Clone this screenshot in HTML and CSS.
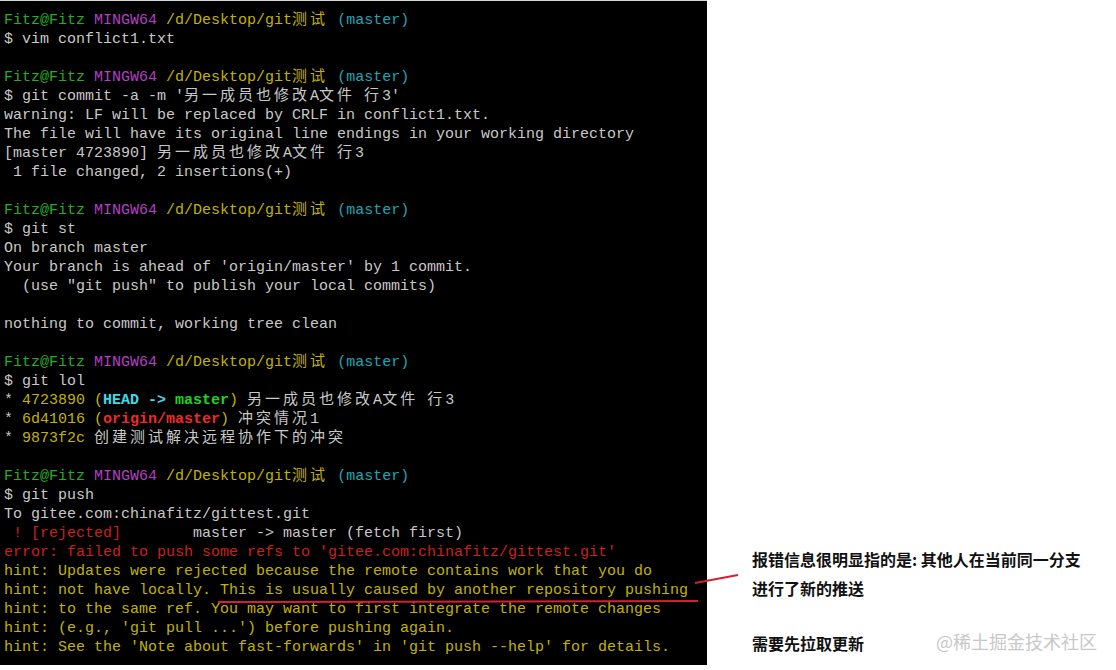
FILE: index.html
```html
<!DOCTYPE html>
<html lang="zh-CN">
  <head>
    <meta charset="utf-8" />
    <meta name="viewport" content="width=device-width, initial-scale=1" />
    <title>git push rejected</title>
    <link rel="stylesheet" href="styles.css">
  </head>
  <body>
    <div class="page">
      <div class="terminal">
        <div class="ln"><span class="user">Fitz@Fitz</span> <span class="sys">MINGW64</span> <span class="path">/d/Desktop/git<span class="w">测试</span></span> <span class="branch">(master)</span></div>
        <div class="ln">$ vim conflict1.txt</div>
        <div class="ln"></div>
        <div class="ln"><span class="user">Fitz@Fitz</span> <span class="sys">MINGW64</span> <span class="path">/d/Desktop/git<span class="w">测试</span></span> <span class="branch">(master)</span></div>
        <div class="ln">$ git commit -a -m '<span class="w">另一成员也修改</span>A<span class="w">文件</span> <span class="w">行</span>3'</div>
        <div class="ln">warning: LF will be replaced by CRLF in conflict1.txt.</div>
        <div class="ln">The file will have its original line endings in your working directory</div>
        <div class="ln">[master 4723890] <span class="w">另一成员也修改</span>A<span class="w">文件</span> <span class="w">行</span>3</div>
        <div class="ln"> 1 file changed, 2 insertions(+)</div>
        <div class="ln"></div>
        <div class="ln"><span class="user">Fitz@Fitz</span> <span class="sys">MINGW64</span> <span class="path">/d/Desktop/git<span class="w">测试</span></span> <span class="branch">(master)</span></div>
        <div class="ln">$ git st</div>
        <div class="ln">On branch master</div>
        <div class="ln">Your branch is ahead of 'origin/master' by 1 commit.</div>
        <div class="ln">  (use "git push" to publish your local commits)</div>
        <div class="ln"></div>
        <div class="ln">nothing to commit, working tree clean</div>
        <div class="ln"></div>
        <div class="ln"><span class="user">Fitz@Fitz</span> <span class="sys">MINGW64</span> <span class="path">/d/Desktop/git<span class="w">测试</span></span> <span class="branch">(master)</span></div>
        <div class="ln">$ git lol</div>
        <div class="ln">* <span class="hash">4723890 (</span><span class="head">HEAD -&gt; </span><span class="local">master</span><span class="hash">)</span> <span class="w">另一成员也修改</span>A<span class="w">文件</span> <span class="w">行</span>3</div>
        <div class="ln">* <span class="hash">6d41016 (</span><span class="remote">origin/master</span><span class="hash">)</span> <span class="w">冲突情况</span>1</div>
        <div class="ln">* <span class="hash">9873f2c</span> <span class="w">创建测试解决远程协作下的冲突</span></div>
        <div class="ln"></div>
        <div class="ln"><span class="user">Fitz@Fitz</span> <span class="sys">MINGW64</span> <span class="path">/d/Desktop/git<span class="w">测试</span></span> <span class="branch">(master)</span></div>
        <div class="ln">$ git push</div>
        <div class="ln">To gitee.com:chinafitz/gittest.git</div>
        <div class="ln"><span class="err"> ! [rejected]</span>        master -&gt; master (fetch first)</div>
        <div class="ln err">error: failed to push some refs to 'gitee.com:chinafitz/gittest.git'</div>
        <div class="ln hint">hint: Updates were rejected because the remote contains work that you do</div>
        <div class="ln hint">hint: not have locally. This is usually caused by another repository pushing</div>
        <div class="ln hint">hint: to the same ref. You may want to first integrate the remote changes</div>
        <div class="ln hint">hint: (e.g., 'git pull ...') before pushing again.</div>
        <div class="ln hint">hint: See the 'Note about fast-forwards' in 'git push --help' for details.</div>
      </div>

      <div class="notes">
        <p class="note">报错信息很明显指的是: 其他人在当前同一分支<br>进行了新的推送</p>
        <div class="note-row">
          <p class="note">需要先拉取更新</p>
          <span class="watermark">@稀土掘金技术社区</span>
        </div>
      </div>

      <!-- red pen marks drawn over the screenshot -->
      <svg class="marks" width="1116" height="670" viewBox="0 0 1116 670">
        <line x1="218" y1="602" x2="698" y2="601" />
        <line x1="695" y1="583" x2="738" y2="575" />
      </svg>
    </div>
  </body>
</html>
```

FILE: styles.css
```css
* {
  margin: 0;
  padding: 0;
  box-sizing: border-box;
}

body {
  background: #fff;
  width: 1116px;
  height: 670px;
  overflow: hidden;
}

.page {
  position: relative;
  display: flex;
  width: 1116px;
  height: 670px;
}

.terminal {
  width: 707px;
  height: 665px;
  flex-shrink: 0;
  background: #000;
  border-top: 1px solid #d8d8d8;
  padding: 9.5px 0 0 4px;
  font-family: "Liberation Mono", "Noto Sans CJK SC", monospace;
  font-size: 15px;
  color: #c8c8c8;
}

.ln {
  height: 19px;
  line-height: 19px;
  white-space: pre;
}

/* CJK glyphs take two terminal cells */
.w {
  letter-spacing: 3px;
}

.user { color: #25ad25; }
.sys { color: #b43fc4; }
.path { color: #c2b300; }
.branch { color: #19a7b8; }
.hash { color: #c2b300; }

.head {
  color: #3fd9e8;
  font-weight: 700;
}

.local {
  color: #22d322;
  font-weight: 700;
}

.remote {
  color: #ee2a2a;
  font-weight: 700;
}

.err { color: #c8201c; }
.hint { color: #c2b300; }

.notes {
  flex: 1;
  display: flex;
  flex-direction: column;
  justify-content: flex-end;
  padding: 0 19px 12px 45px;
}

.note {
  font-family: "Noto Sans CJK SC", sans-serif;
  font-size: 16px;
  font-weight: 700;
  line-height: 29px;
  color: #111;
}

.note-row {
  display: flex;
  justify-content: space-between;
  align-items: center;
  margin-top: 26px;
}

.watermark {
  font-family: "Noto Sans CJK SC", sans-serif;
  font-size: 18px;
  color: #c8c8c8;
  margin-top: -6px;
}

.marks {
  position: absolute;
  top: 0;
  left: 0;
  pointer-events: none;
}

.marks line {
  stroke: #d42030;
  stroke-width: 2;
}
```
